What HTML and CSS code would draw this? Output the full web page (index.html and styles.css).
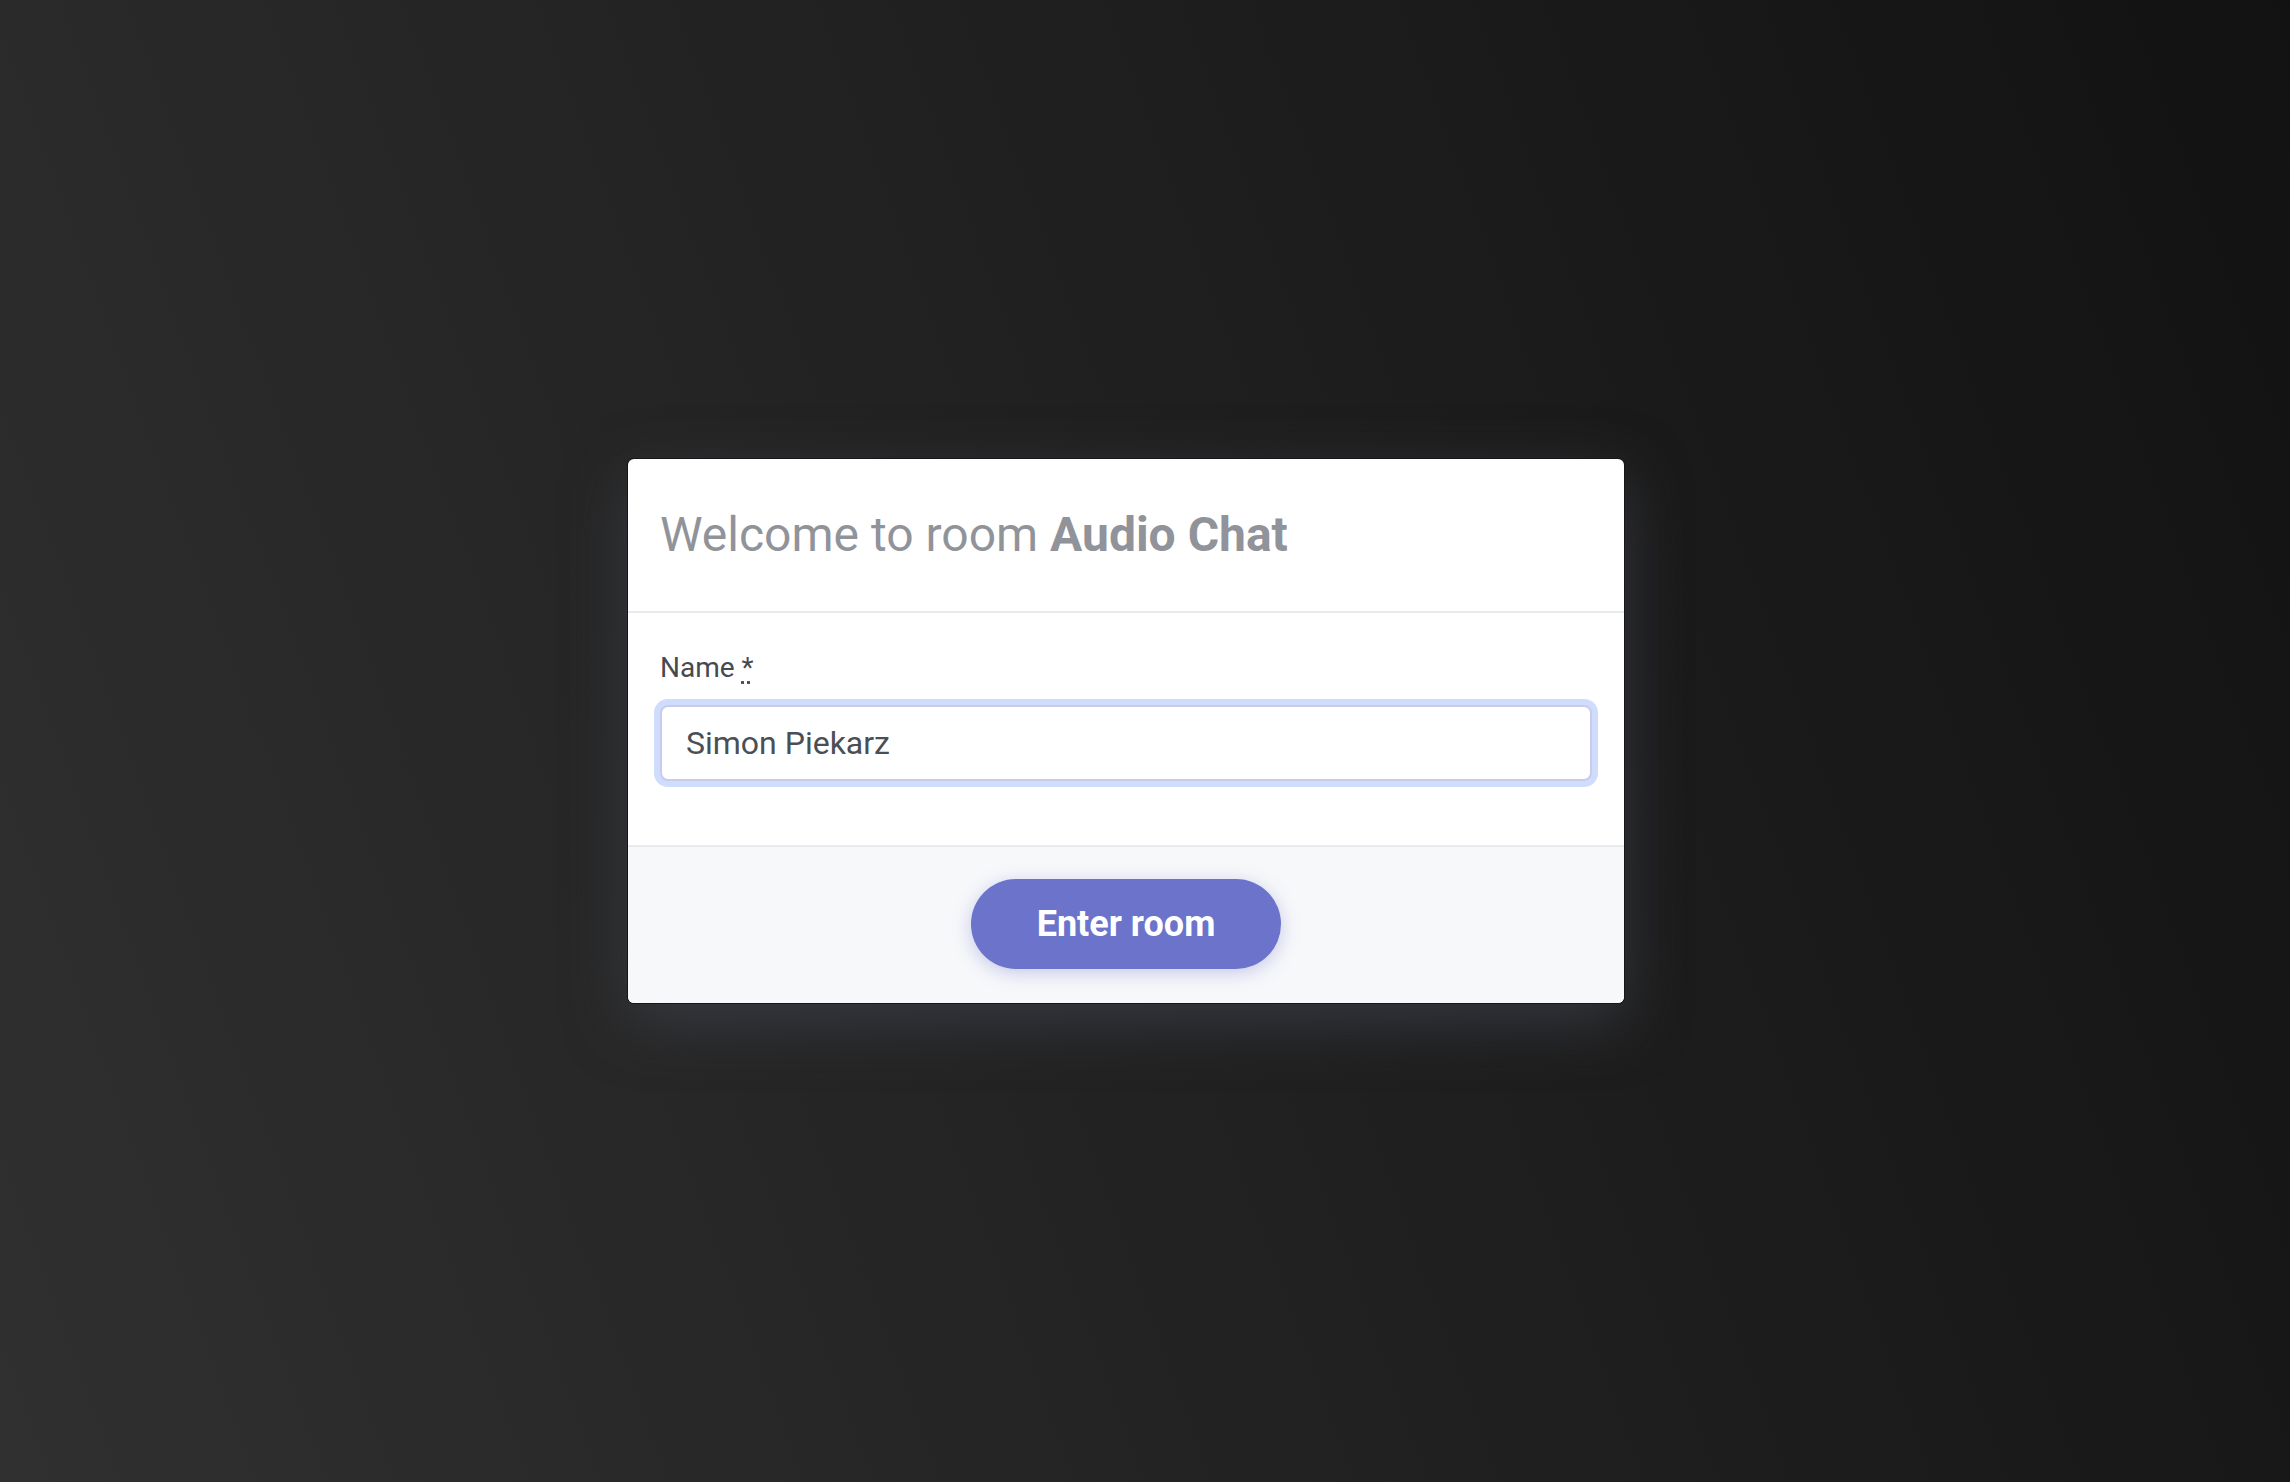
FILE: index.html
```html
<!DOCTYPE html>
<html lang="en">
<head>
<meta charset="UTF-8">
<meta name="viewport" content="width=device-width, initial-scale=1.0">
<title>Audio Chat</title>
<link rel="stylesheet" href="styles.css">
</head>
<body>

<div class="page">
    <form class="join-card" onsubmit="return false">
        <div class="join-header">
            <h1 class="join-title">Welcome to room <b>Audio Chat</b></h1>
        </div>
        <div class="join-body">
            <label class="field-label" for="nameInput">Name <abbr title="required">*</abbr></label>
            <input class="field-input" id="nameInput" type="text" value="Simon Piekarz">
        </div>
        <div class="join-footer">
            <button class="enter-button" type="submit">Enter room</button>
        </div>
    </form>
</div>

</body>
</html>
```

FILE: styles.css
```css
html, body {
    margin: 0;
    padding: 0;
}

body {
    font-family: Roboto, "Liberation Sans", sans-serif;
    background: linear-gradient(70deg, #303030 0%, #222 45%, #121212 100%);
    min-height: 100vh;
}

.page {
    display: flex;
    justify-content: center;
    align-items: center;
    min-height: 100vh;
    box-sizing: border-box;
    padding: 0 38px 20px 0;
}

.join-card {
    width: 996px;
    background-color: #fff;
    border-radius: 6px;
    overflow: hidden;
    box-shadow: 0 0 0 1px #161616, 0 18px 60px rgba(62, 64, 74, 0.75);
}

.join-header {
    padding: 40px 32px;
    border-bottom: 2px solid #e9e9f0;
}

.join-title {
    margin: 0;
    font-size: 48px;
    line-height: 72px;
    font-weight: 400;
    color: #909399;
}

.join-title b {
    font-weight: 700;
}

.join-body {
    padding: 34px 32px 64px;
    border-bottom: 2px solid #e9e9f0;
}

.field-label {
    display: block;
    font-size: 28px;
    line-height: 42px;
    color: #464a50;
    margin-bottom: 16px;
}

.field-label abbr {
    text-decoration: underline dotted;
    text-underline-offset: 4px;
}

.field-input {
    display: block;
    width: 100%;
    box-sizing: border-box;
    height: 76px;
    padding: 0 24px;
    font-family: Roboto, "Liberation Sans", sans-serif;
    font-size: 32px;
    color: #4a4e55;
    border: 2px solid #c9cbec;
    border-radius: 8px;
    outline: none;
    box-shadow: 0 0 0 6px #cfdcfc;
}

.join-footer {
    background-color: #f7f8fa;
    padding: 32px 32px 34px;
    display: flex;
    justify-content: center;
}

.enter-button {
    height: 90px;
    padding: 0 66px;
    border: none;
    border-radius: 45px;
    background-color: #6b73ca;
    color: #fff;
    font-family: Roboto, "Liberation Sans", sans-serif;
    font-size: 36px;
    font-weight: 700;
    box-shadow: 0 4px 18px rgba(107, 115, 202, 0.35);
    cursor: pointer;
}

.enter-button:hover {
    background-color: #5d65bd;
}
```
